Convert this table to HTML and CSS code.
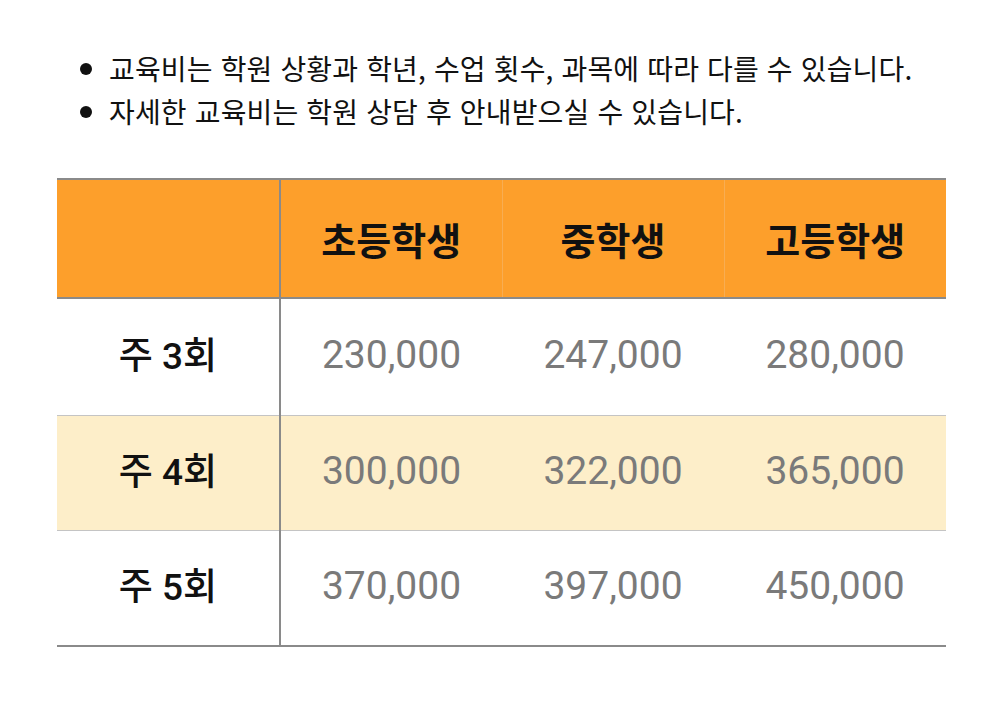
FILE: index.html
```html
<!DOCTYPE html>
<html lang="ko">
<head>
<meta charset="utf-8">
<link rel="stylesheet" href="styles.css">
</head>
<body>
<div class="page">
  <ul class="notes">
    <li>교육비는 학원 상황과 학년, 수업 횟수, 과목에 따라 다를 수 있습니다.</li>
    <li>자세한 교육비는 학원 상담 후 안내받으실 수 있습니다.</li>
  </ul>
  <table class="fees">
    <thead>
      <tr>
        <th class="label"></th>
        <th>초등학생</th>
        <th>중학생</th>
        <th>고등학생</th>
      </tr>
    </thead>
    <tbody>
      <tr class="r1">
        <th class="label">주 3회</th>
        <td>230,000</td>
        <td>247,000</td>
        <td>280,000</td>
      </tr>
      <tr class="r2 alt">
        <th class="label">주 4회</th>
        <td>300,000</td>
        <td>322,000</td>
        <td>365,000</td>
      </tr>
      <tr class="r3">
        <th class="label">주 5회</th>
        <td>370,000</td>
        <td>397,000</td>
        <td>450,000</td>
      </tr>
    </tbody>
  </table>
</div>
</body>
</html>
```
FILE: styles.css
```css
html, body {
  margin: 0;
  padding: 0;
  background: #ffffff;
}
.page {
  padding: 47px 54px 0 57px;
  font-family: "Noto Sans CJK KR", "Noto Sans", sans-serif;
  color: #111;
}
.notes {
  list-style: none;
  margin: 0;
  padding: 0;
}
.notes li {
  position: relative;
  padding-left: 52px;
  font-size: 28px;
  line-height: 43px;
  letter-spacing: 0.15px;
}
.notes li::before {
  content: "";
  position: absolute;
  left: 23px;
  top: 16px;
  width: 12px;
  height: 12px;
  border-radius: 50%;
  background: #111;
}
.fees {
  margin-top: 45px;
  width: 889px;
  border-collapse: collapse;
  table-layout: fixed;
  font-family: Roboto, "Noto Sans CJK KR", sans-serif;
  border-top: 2px solid #8a8a8a;
  border-bottom: 2px solid #8a8a8a;
}
.fees th, .fees td {
  text-align: center;
  padding: 0;
}
.fees thead th {
  background: #fd9f2b;
  height: 117px;
  font-size: 38px;
  font-weight: 700;
  color: #111;
  border-bottom: 2px solid #8a8a8a;
  border-left: 1px solid #f8ad52;
}
.fees thead th:first-child {
  border-left: none;
}
.fees th.label {
  width: 222px;
  border-right: 2px solid #8a8a8a;
}
.fees tbody th.label {
  font-size: 37px;
  font-weight: 500;
  color: #111;
  padding-bottom: 8px;
}
.fees tbody tr {
  border-top: 1px solid #c4c4c4;
}
.fees tbody tr.r1 {
  height: 117px;
  border-top: none;
}
.fees tbody tr.r2 {
  height: 115px;
}
.fees tbody tr.r3 {
  height: 116px;
}
.fees td {
  font-size: 39px;
  color: #7a7a7a;
  font-weight: 400;
  padding-bottom: 3px;
}
.fees tr.alt {
  background: #fdeec9;
}
```
